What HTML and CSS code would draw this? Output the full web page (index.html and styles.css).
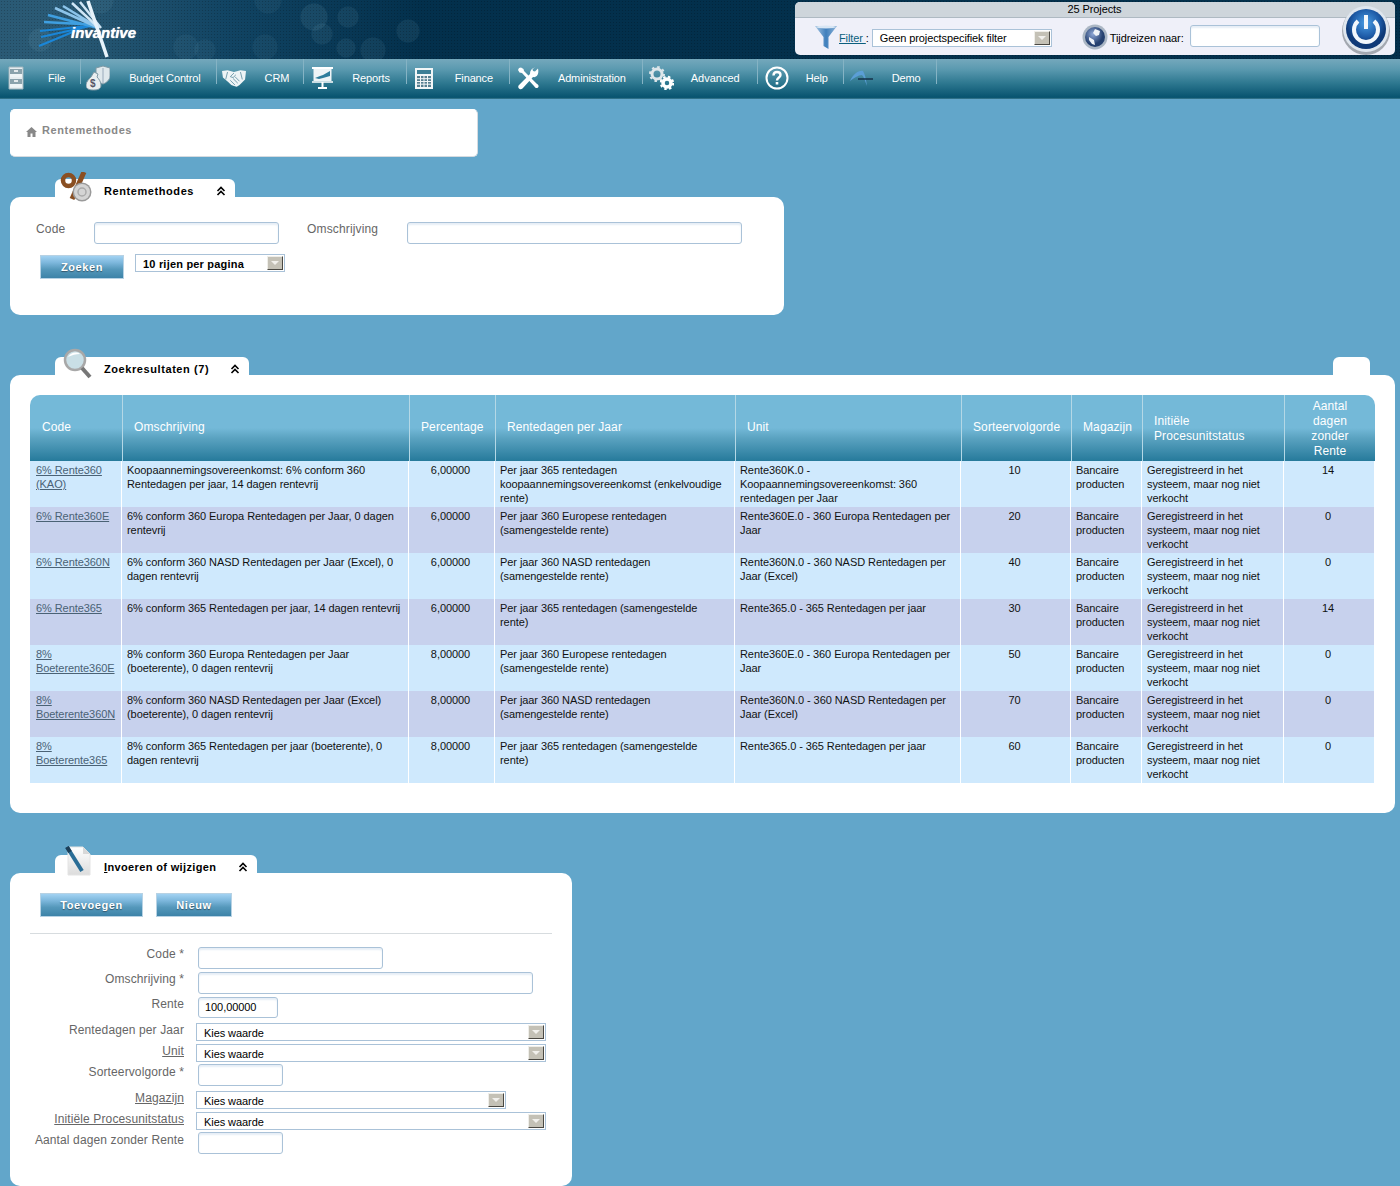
FILE: index.html
```html
<!DOCTYPE html>
<html lang="nl">
<head>
<meta charset="utf-8">
<title>Rentemethodes</title>
<link rel="stylesheet" href="styles.css">
</head>
<body>
<svg class="defs" width="0" height="0" aria-hidden="true">
  <symbol id="chev" viewBox="0 0 10 10"><path d="M1.500 5 5 1.500 8.500 5M1.500 9 5 5.500 8.500 9" fill="none" stroke="#000" stroke-width="1.600"/></symbol>
</svg>
<header class="top">
  <div class="logo">
    <svg class="logo-rays" width="80" height="59" viewBox="36 0 80 59">
      <g fill="none">
        <path d="M39 46 80 29M41 37 95 25M40 31 97 25" stroke="#1a86d8" stroke-width="2"/>
        <path d="M44 22 98 25M48 15 98 28" stroke="#3f9fe0" stroke-width="2.500"/>
        <path d="M55 8 99 28M63 6 99 28" stroke="#8cc4ea" stroke-width="2.500"/>
        <path d="M72 3 99 28M80 2 101 28" stroke="#cfe6f6" stroke-width="2.500"/>
        <path d="M88 1 107 57" stroke="#e8f3fb" stroke-width="3.500"/>
      </g>
    </svg>
    <span class="logo-text">invantive</span>
  </div>
  <div class="projbox">
    <div class="projbox-title">25 Projects</div>
    <div class="projbox-row">
      <svg class="funnel" width="22" height="24" viewBox="0 0 22 24"><defs><linearGradient id="fg" x1="0" x2="1"><stop offset="0" stop-color="#a8c6e2"/><stop offset=".5" stop-color="#3f7fbc"/><stop offset="1" stop-color="#8fb4d8"/></linearGradient></defs><path d="M0 1h22L13.500 12v12l-5-3V12z" fill="url(#fg)"/><ellipse cx="11" cy="2" rx="10" ry="1.500" fill="#d8e6f4"/></svg>
      <a class="filter-link" href="#">Filter </a><span class="colon">:</span>
      <div class="sel sel-filter"><span>Geen projectspecifiek filter</span><i class="arrow"></i></div>
      <svg class="globe" width="26" height="26" viewBox="0 0 26 26"><defs><radialGradient id="gg" cx=".4" cy=".35"><stop offset="0" stop-color="#8fa8d8"/><stop offset="1" stop-color="#25406f"/></radialGradient></defs><circle cx="13" cy="13" r="12.500" fill="#aab6c4"/><circle cx="13" cy="13" r="10" fill="url(#gg)"/><path d="M13 5l5 2-1 4-3 1-3-3zM7 13l5 3 1 5-3-1-3-4z" fill="#eef2f8"/></svg>
      <span class="tijd">Tijdreizen naar:</span>
      <input class="field field-tijd" type="text">
    </div>
    <svg class="power" width="50" height="50" viewBox="0 0 50 50"><defs><radialGradient id="pg" cx=".5" cy=".35"><stop offset="0" stop-color="#4a9ee6"/><stop offset=".7" stop-color="#1d5aa6"/><stop offset="1" stop-color="#0f3a78"/></radialGradient></defs><circle cx="25" cy="26" r="24" fill="#586068" opacity=".5"/><circle cx="25" cy="24" r="23" fill="#dfe6ee"/><circle cx="25" cy="24" r="20" fill="url(#pg)"/><path d="M17 16a12 12 0 1 0 16 0" fill="none" stroke="#f2f7fc" stroke-width="4"/><path d="M25 10v14" stroke="#f2f7fc" stroke-width="4"/></svg>
  </div>
</header>

<nav class="nav">
  <a class="nav-item" href="#"><span class="nav-ico"><svg width="16" height="24" viewBox="0 0 16 24"><path d="M1 1h14v22H1z" fill="#e6edf0" stroke="#9fb4bc"/><path d="M2 3h12v8H2zM2 13h12v8H2z" fill="#8aa2ac"/><path d="M2 8h12v3H2zM2 18h12v3H2z" fill="#eef4f6"/><path d="M6 5h4M6 15h4" stroke="#fff" stroke-width="1.500"/></svg></span>File</a>
  <a class="nav-item" href="#"><span class="nav-ico nav-ico-budget"><svg width="24" height="26" viewBox="0 0 24 26"><path d="M10 3l7-2 7 2v8c0 4-4 7-7 8-3-1-7-4-7-8z" fill="#dfe8ec" stroke="#7d98a4"/><path d="M17 3v15" stroke="#9ab"/><path d="M8 7l4 2-1 3c2 2 4 5 4 8 0 4-3 5-7.500 5S0 24 0 20c0-3 3-6 5-8z" fill="#e9eef0" stroke="#7d98a4"/><text x="4" y="22" class="ico-dollar">$</text></svg></span>Budget Control</a>
  <a class="nav-item ni-less" href="#"><span class="nav-ico nav-ico-crm"><svg width="24" height="19" viewBox="0 0 26 20"><path d="M0 2l6-1 7 2 7-2 6 1-1 9-6 6-3 2-3-1-3-1-3-3-6-5z" fill="#eef4f6"/><path d="M6 3 4 11M20 3l2 8M9 12l5 5M12 10l5 5M14 8l5 5M13 4l-4 4 3 1 3-3" fill="none" stroke="#6e98a8"/></svg></span>CRM</a>
  <a class="nav-item ni-more" href="#"><span class="nav-ico"><svg width="21" height="22" viewBox="0 0 21 22"><path d="M0 1h21" stroke="#fff" stroke-width="2"/><path d="M1.500 2h18v12h-18z" fill="#eef4f6"/><path d="M3 11l5-2 3-1 7-4v5l-7 2-4 1z" fill="#2e7d9c"/><path d="M0 15h21" stroke="#fff" stroke-width="1.500"/><path d="M10.500 15v5M6 21h9" stroke="#fff" stroke-width="2"/></svg></span>Reports</a>
  <a class="nav-item ni-more" href="#"><span class="nav-ico"><svg width="18" height="21" viewBox="0 0 18 21"><path d="M0 0h18v21H0z" fill="#f2f6f7"/><path d="M2 2h14v4H2z" fill="#3d7f96"/><path d="M2 8h14v11H2z" fill="#567f90"/><path d="M5.500 8v11M9 8v11M12.500 8v11M2 10.700h14M2 13.500h14M2 16.200h14" stroke="#f2f6f7"/></svg></span>Finance</a>
  <a class="nav-item ni-more" href="#"><span class="nav-ico nav-ico-6"><svg width="23" height="23" viewBox="0 0 23 23"><path d="M2 1 1 3l1.500 2.500L5 6l12 13c1 1.500 2.500 3 4 1.500s0-3-1.500-4L7 4l-.5-2L4 .5z" fill="#fff"/><path d="M21 1.500l-3 3-2-.5-.5-2L18 .5a6 6 0 0 0-5 6.500L2 18c-1.500 1.500-.5 3 0 3.500s2 1.500 3.500 0L16 10c3 .8 6.500-2 5-8.500z" fill="#fff"/></svg></span>Administration</a>
  <a class="nav-item ni-wide" href="#"><span class="nav-ico nav-ico-5"><svg width="25" height="24" viewBox="0 0 25 24"><circle cx="8" cy="8" r="5" fill="none" stroke="#dde6ea" stroke-width="3"/><circle cx="8" cy="8" r="7" fill="none" stroke="#dde6ea" stroke-width="2" stroke-dasharray="2.500 3"/><circle cx="18" cy="17" r="4" fill="none" stroke="#fff" stroke-width="3.500"/><circle cx="18" cy="17" r="6.200" fill="none" stroke="#fff" stroke-width="2" stroke-dasharray="2.500 2.400"/></svg></span>Advanced</a>
  <a class="nav-item" href="#"><span class="nav-ico nav-ico-6"><svg width="24" height="24" viewBox="0 0 24 24"><circle cx="12" cy="12" r="10.500" fill="none" stroke="#fff" stroke-width="2"/><path d="M8.500 9.500C8.500 7 10 6 12 6s3.500 1.200 3.500 3c0 2.500-3.500 2.500-3.500 5.500" fill="none" stroke="#fff" stroke-width="2.400"/><path d="M10.700 16h2.600v2.600h-2.600z" fill="#fff"/></svg></span>Help</a>
  <a class="nav-item" href="#"><span class="nav-ico nav-ico-5"><svg width="24" height="17" viewBox="0 0 24 17"><path d="M0 11C3 4 9 0 13 1c2 3 3 8 4 15-2-5-3-9-5-11-4 0-8 3-12 6z" fill="#5b9ed6"/><path d="M8 9h15" stroke="#16324a" stroke-width="1.500"/></svg></span>Demo</a>
</nav>

<main class="main">
  <div class="crumb">
    <svg class="home" width="11" height="11" viewBox="0 0 11 11"><path d="M5.500 1 0 6h1.500v5h3V7.500h2V11h3V6H11z" fill="#888"/></svg>
    <span>Rentemethodes</span>
  </div>

  <section class="section sec-search">
    <div class="tab tab-1">
      <svg class="tab-ico ico-pct" width="34" height="30" viewBox="0 0 34 30"><circle cx="8.500" cy="8.500" r="5.500" fill="none" stroke="#8a4f22" stroke-width="4.500"/><path d="M24 0 12 27" stroke="#8a4f22" stroke-width="5"/><circle cx="22" cy="20" r="9.500" fill="#9a9a9a"/><circle cx="22" cy="20" r="8" fill="#d4d4d4"/><circle cx="22" cy="20" r="4" fill="none" stroke="#aaa" stroke-width="1.500"/></svg>
      <span class="tab-title">Rentemethodes</span>
      <svg class="chev" width="10" height="10"><use href="#chev"/></svg>
    </div>
    <div class="panel panel-search">
      <div class="search-row">
        <label class="lbl lbl-code">Code</label>
        <input class="field field-code" type="text">
        <label class="lbl lbl-oms">Omschrijving</label>
        <input class="field field-oms" type="text">
      </div>
      <div class="search-row2">
        <button class="btn btn-zoek" type="button">Zoeken</button>
        <div class="sel sel-rows"><span>10 rijen per pagina</span><i class="arrow"></i></div>
      </div>
    </div>
  </section>

  <section class="section sec-results">
    <div class="tab-line">
      <div class="tab tab-2">
        <svg class="tab-ico ico-mag" width="30" height="32" viewBox="0 0 30 32"><circle cx="13" cy="13" r="10" fill="#c9dfe6" stroke="#a8a8a8" stroke-width="2.500"/><path d="M6 10c2-4 8-6 12-3-4 0-8 1-12 3z" fill="#fff"/><path d="M20 21l8 9" stroke="#777" stroke-width="4"/></svg>
        <span class="tab-title">Zoekresultaten (7)</span>
        <svg class="chev" width="10" height="10"><use href="#chev"/></svg>
      </div>
      <div class="tab tab-blank"></div>
    </div>
    <div class="panel panel-results">
      <table class="grid">
        <colgroup><col class="c1"><col class="c2"><col class="c3"><col class="c4"><col class="c5"><col class="c6"><col class="c7"><col class="c8"><col class="c9"></colgroup>
        <thead>
          <tr>
            <th>Code</th><th>Omschrijving</th><th>Percentage</th><th>Rentedagen per Jaar</th><th>Unit</th><th>Sorteervolgorde</th><th>Magazijn</th><th class="th-low">Initiële Procesunitstatus</th><th class="ctr th-low">Aantal dagen zonder Rente</th>
          </tr>
        </thead>
        <tbody>
          <tr><td class="code"><a href="#">6% Rente360 (KAO)</a></td><td>Koopaannemingsovereenkomst: 6% conform 360 Rentedagen per jaar, 14 dagen rentevrij</td><td class="ctr">6,00000</td><td class="days">Per jaar 365 rentedagen koopaannemingsovereenkomst (enkelvoudige rente)</td><td>Rente360K.0 - Koopaannemingsovereenkomst: 360 rentedagen per Jaar</td><td class="ctr">10</td><td>Bancaire producten</td><td>Geregistreerd in het systeem, maar nog niet verkocht</td><td class="ctr">14</td></tr>
          <tr><td class="code"><a href="#">6% Rente360E</a></td><td>6% conform 360 Europa Rentedagen per Jaar, 0 dagen rentevrij</td><td class="ctr">6,00000</td><td class="days">Per jaar 360 Europese rentedagen (samengestelde rente)</td><td>Rente360E.0 - 360 Europa Rentedagen per Jaar</td><td class="ctr">20</td><td>Bancaire producten</td><td>Geregistreerd in het systeem, maar nog niet verkocht</td><td class="ctr">0</td></tr>
          <tr><td class="code"><a href="#">6% Rente360N</a></td><td>6% conform 360 NASD Rentedagen per Jaar (Excel), 0 dagen rentevrij</td><td class="ctr">6,00000</td><td class="days">Per jaar 360 NASD rentedagen (samengestelde rente)</td><td>Rente360N.0 - 360 NASD Rentedagen per Jaar (Excel)</td><td class="ctr">40</td><td>Bancaire producten</td><td>Geregistreerd in het systeem, maar nog niet verkocht</td><td class="ctr">0</td></tr>
          <tr><td class="code"><a href="#">6% Rente365</a></td><td>6% conform 365 Rentedagen per jaar, 14 dagen rentevrij</td><td class="ctr">6,00000</td><td class="days">Per jaar 365 rentedagen (samengestelde rente)</td><td>Rente365.0 - 365 Rentedagen per jaar</td><td class="ctr">30</td><td>Bancaire producten</td><td>Geregistreerd in het systeem, maar nog niet verkocht</td><td class="ctr">14</td></tr>
          <tr><td class="code"><a href="#">8% Boeterente360E</a></td><td>8% conform 360 Europa Rentedagen per Jaar (boeterente), 0 dagen rentevrij</td><td class="ctr">8,00000</td><td class="days">Per jaar 360 Europese rentedagen (samengestelde rente)</td><td>Rente360E.0 - 360 Europa Rentedagen per Jaar</td><td class="ctr">50</td><td>Bancaire producten</td><td>Geregistreerd in het systeem, maar nog niet verkocht</td><td class="ctr">0</td></tr>
          <tr><td class="code"><a href="#">8% Boeterente360N</a></td><td>8% conform 360 NASD Rentedagen per Jaar (Excel) (boeterente), 0 dagen rentevrij</td><td class="ctr">8,00000</td><td class="days">Per jaar 360 NASD rentedagen (samengestelde rente)</td><td>Rente360N.0 - 360 NASD Rentedagen per Jaar (Excel)</td><td class="ctr">70</td><td>Bancaire producten</td><td>Geregistreerd in het systeem, maar nog niet verkocht</td><td class="ctr">0</td></tr>
          <tr><td class="code"><a href="#">8% Boeterente365</a></td><td>8% conform 365 Rentedagen per jaar (boeterente), 0 dagen rentevrij</td><td class="ctr">8,00000</td><td class="days">Per jaar 365 rentedagen (samengestelde rente)</td><td>Rente365.0 - 365 Rentedagen per jaar</td><td class="ctr">60</td><td>Bancaire producten</td><td>Geregistreerd in het systeem, maar nog niet verkocht</td><td class="ctr">0</td></tr>
        </tbody>
      </table>
    </div>
  </section>

  <section class="section sec-edit">
    <div class="tab tab-3">
      <svg class="tab-ico ico-doc" width="30" height="32" viewBox="0 0 30 32"><defs><linearGradient id="dg" x1="0" y1="0" x2="0" y2="1"><stop offset="0" stop-color="#fff"/><stop offset="1" stop-color="#dcdcdc"/></linearGradient></defs><path d="M4 2h15l7 7v21H4z" fill="url(#dg)" stroke="#e4e4e4"/><path d="M19 2v7h7z" fill="#d8d8d8"/><path d="M3 2l15 24" stroke="#2a6d96" stroke-width="4"/><path d="M3 2l3 5" stroke="#1d3f58" stroke-width="4"/></svg>
      <span class="tab-title"><u>I</u>nvoeren of wijzigen</span>
      <svg class="chev" width="10" height="10"><use href="#chev"/></svg>
    </div>
    <div class="panel panel-edit">
      <div class="edit-btns">
        <button class="btn btn-add" type="button">Toevoegen</button>
        <button class="btn btn-new" type="button">Nieuw</button>
      </div>
      <hr class="rule">
      <form class="edit-form">
        <div class="frow"><label class="flbl">Code *</label><input class="field f-185" type="text"></div>
        <div class="frow"><label class="flbl">Omschrijving *</label><input class="field f-335" type="text"></div>
        <div class="frow frow-rente"><label class="flbl">Rente</label><input class="field f-80" type="text" value="100,00000"></div>
        <div class="frow frow-s"><label class="flbl">Rentedagen per Jaar</label><div class="sel sel-w350"><span>Kies waarde</span><i class="arrow"></i></div></div>
        <div class="frow frow-s2"><label class="flbl"><a href="#">Unit</a></label><div class="sel sel-w350"><span>Kies waarde</span><i class="arrow"></i></div></div>
        <div class="frow frow-sort"><label class="flbl lbl-low">Sorteervolgorde *</label><input class="field f-85" type="text"></div>
        <div class="frow frow-s"><label class="flbl"><a href="#">Magazijn</a></label><div class="sel sel-w310"><span>Kies waarde</span><i class="arrow"></i></div></div>
        <div class="frow frow-s2"><label class="flbl"><a href="#">Initiële Procesunitstatus</a></label><div class="sel sel-w350"><span>Kies waarde</span><i class="arrow"></i></div></div>
        <div class="frow"><label class="flbl lbl-low">Aantal dagen zonder Rente</label><input class="field f-85" type="text"></div>
      </form>
    </div>
  </section>
</main>
</body>
</html>
```
FILE: styles.css
```css
* { box-sizing: border-box; }
html, body { margin: 0; padding: 0; }
body {
  background: #62a6ca;
  font-family: "Liberation Sans", Arial, sans-serif;
  font-size: 11px;
  color: #000;
  height: 1186px;
  overflow: hidden;
}
.defs { position: absolute; }

/* top banner */
.top {
  position: relative;
  height: 59px;
  display: flex;
  justify-content: space-between;
  background-color: #03304c;
  background-image:
    radial-gradient(rgba(0,0,0,.2) 1px, transparent 1px),
    radial-gradient(circle at 314px 17px, rgba(120,170,190,.13) 13px, transparent 14px),
    radial-gradient(circle at 348px 17px, rgba(120,170,190,.11) 10px, transparent 11px),
    radial-gradient(circle at 322px 34px, rgba(120,170,190,.11) 10px, transparent 11px),
    radial-gradient(circle at 408px 31px, rgba(120,170,190,.11) 11px, transparent 12px),
    radial-gradient(circle at 346px 48px, rgba(120,170,190,.11) 9px, transparent 10px),
    radial-gradient(circle at 373px 50px, rgba(120,170,190,.1) 12px, transparent 13px),
    radial-gradient(circle at 265px 47px, rgba(120,170,190,.08) 12px, transparent 13px),
    radial-gradient(circle at 186px 47px, rgba(120,170,190,.08) 12px, transparent 13px),
    radial-gradient(circle at 205px 50px, rgba(120,170,190,.08) 10px, transparent 11px),
    radial-gradient(circle at 268px 0, rgba(120,170,190,.08) 13px, transparent 14px),
    radial-gradient(circle at 40px 40px, rgba(120,170,190,.12) 11px, transparent 12px),
    radial-gradient(circle at 100px 0, rgba(120,170,190,.1) 13px, transparent 14px),
    linear-gradient(90deg, #2a5a75 0, #2a5a75 60px, #114463 230px, #03304c 420px);
  background-size: 3px 3px, auto, auto, auto, auto, auto, auto, auto, auto, auto, auto, auto, auto, auto;
}
.logo { position: relative; width: 400px; }
.logo-rays { position: absolute; left: 36px; top: 0; }
.logo-text {
  position: absolute;
  left: 71px;
  top: 24px;
  color: #fff;
  font-size: 15px;
  line-height: 18px;
  font-weight: bold;
  font-style: italic;
  text-shadow: 0 0 1px #fff;
}
.projbox {
  position: relative;
  width: 600px;
  height: 53px;
  margin: 2px 5px 0 0;
  background: #eff0f9;
  border-radius: 5px;
  letter-spacing: -.1px;
}
.projbox-title {
  height: 16px;
  line-height: 14px;
  padding-right: 1px;
  text-align: center;
  background: #ced5db;
  border-bottom: 1px solid #aeb9c2;
  border-radius: 5px 5px 0 0;
  font-size: 11px;
}
.projbox-row { display: flex; align-items: center; height: 37px; padding: 2px 0 0 20px; }
.funnel { margin-top: -1px; }
.filter-link { margin-left: 2px; color: #0b5f7e; font-size: 11px; white-space: pre; }
.colon { margin-left: 0; }
.sel-filter { width: 180px; margin-left: 3px; }
.globe { margin-left: 30px; margin-top: -2px; }
.tijd { margin-left: 2px; width: 80px; }
.field-tijd { width: 130px; height: 22px; margin-top: -3px; }
.power { position: absolute; left: 546px; top: 3px; }

/* nav */
.nav {
  height: 40px;
  display: flex;
  background: linear-gradient(#74a8bc 0, #5b9ab0 25%, #2e7890 60%, #07536f 96%, #3f7c92 100%);
}
.nav-item {
  display: flex;
  align-items: center;
  height: 38px;
  padding-right: 16px;
  background: linear-gradient(#85b3c4, #85b3c4) right top / 1px 25px no-repeat;
  color: #fff;
  text-decoration: none;
  font-size: 11px;
  letter-spacing: -.14px;
  white-space: nowrap;
}
.ni-less { padding-right: 15px; }
.ni-more { padding-right: 17px; }
.ni-wide { padding-right: 18px; letter-spacing: 0; }
.nav-ico { flex: none; width: 48px; padding-left: 8px; display: flex; align-items: center; }
.nav-ico-budget { padding-left: 5px; }
.nav-ico-crm { padding-left: 5px; }
.nav-ico-6 { padding-left: 7px; }
.nav-ico-5 { padding-left: 6px; }
.ico-dollar { font: bold 10px "Liberation Sans", sans-serif; fill: #556; }

/* content */
.main { padding: 10px 0 0 10px; }
.crumb {
  width: 468px;
  height: 48px;
  background: #fff;
  border: 1px solid #d5dbe0;
  border-top-color: #fff;
  border-left-color: #fff;
  border-radius: 5px;
  display: flex;
  align-items: flex-start;
  gap: 5px;
  padding: 14px 0 0 15px;
  color: #888;
  font-weight: bold;
  font-size: 11px;
  letter-spacing: .58px;
  line-height: 13px;
}
.home { margin-top: 2px; }

.section { margin-top: 42px; }
.sec-search { margin-top: 22px; }

.tab-line { display: flex; justify-content: space-between; width: 1385px; }
.tab {
  position: relative;
  height: 18px;
  margin-left: 45px;
  background: #fff;
  border-radius: 6px 6px 0 0;
  display: flex;
  align-items: flex-start;
  padding: 6px 0 0 49px;
}
.tab-1 { width: 180px; }
.tab-2 { width: 194px; }
.tab-3 { width: 202px; }
.tab-blank { width: 37px; margin: 0 25px 0 0; padding: 0; }
.tab-title {
  font-size: 11px;
  font-weight: bold;
  line-height: 13px;
  letter-spacing: .58px;
  white-space: nowrap;
}
.tab-3 .tab-title { letter-spacing: .36px; }
.tab-ico { position: absolute; }
.ico-pct { left: 5px; top: -7px; }
.ico-mag { left: 7px; top: -10px; }
.ico-doc { left: 9px; top: -10px; }
.chev { position: absolute; right: 9px; top: 7px; }

.panel { background: #fff; border-radius: 10px; }
.panel-search { width: 774px; height: 118px; padding: 25px 0 0 26px; }
.panel-results { width: 1385px; padding: 20px 20px 30px; }
.panel-edit { width: 562px; height: 313px; padding: 20px 20px 0; }

.lbl { font-size: 12px; letter-spacing: .15px; color: #666; line-height: 15px; margin-top: 0; }
.search-row { display: flex; align-items: flex-start; height: 22px; }
.lbl-code { width: 58px; }
.lbl-oms { width: 100px; margin-left: 28px; }
.field-code { width: 185px; }
.field-oms { width: 335px; }
.search-row2 { display: flex; align-items: flex-start; margin: 10px 0 0 4px; }
.btn-zoek { margin-top: 1px; width: 84px; }
.sel-rows { width: 150px; margin-left: 11px; font-weight: bold; letter-spacing: .2px; }
.sel-rows span { padding-top: 2px; }

.field {
  display: block;
  height: 22px;
  padding: 0 6px;
  border: 1px solid #aac2d8;
  border-radius: 3px;
  background: #fff;
  box-shadow: inset 0 2px 2px #e6eef6;
  font: 11px "Liberation Sans", Arial, sans-serif;
  letter-spacing: -.07px;
  color: #000;
  outline: 0;
}
.sel {
  display: flex;
  align-items: center;
  justify-content: space-between;
  height: 18px;
  padding: 0 1px 0 7px;
  border: 1px solid #aac2d8;
  background: #fff;
  font-size: 11px;
  white-space: nowrap;
}
.arrow {
  position: relative;
  display: block;
  flex: none;
  width: 16px;
  height: 14px;
  background: #c4c1b6;
  border: 1px solid;
  border-color: #efeee9 #4a4842 #4a4842 #efeee9;
}
.arrow::after {
  content: "";
  position: absolute;
  left: 3px;
  top: 4px;
  border: 4px solid transparent;
  border-top: 4px solid #f1f0ec;
  border-bottom: 0;
}
.btn {
  height: 24px;
  padding: 0;
  border: 1px solid #b7d2e4;
  background: linear-gradient(#a2d2f2 0, #7db7dc 30%, #5598bb 60%, #3d83a8 100%);
  color: #fff;
  font: bold 11px "Liberation Sans", Arial, sans-serif;
  letter-spacing: .6px;
  text-shadow: 0 1px 1px #33566b;
}

/* table */
.grid { width: 1345px; table-layout: fixed; border-collapse: separate; border-spacing: 0; }
.c1 { width: 92px; } .c2 { width: 287px; } .c3 { width: 86px; } .c4 { width: 240px; } .c5 { width: 226px; }
.c6 { width: 110px; } .c7 { width: 71px; } .c8 { width: 142px; } .c9 { width: 91px; }
.grid th {
  height: 66px;
  padding: 2px 6px 4px 11px;
  border-left: 1px solid #b4d8e6;
  background: linear-gradient(#74b9d8 0, #74b9d8 50%, #5ba3c1 65%, #267a9b 100%);
  color: #fff;
  font-size: 12px;
  font-weight: normal;
  letter-spacing: .12px;
  line-height: 15px;
  text-align: left;
}
.grid th.th-low { padding-top: 4px; padding-bottom: 2px; }
.grid th:first-child { border-left: 0; border-top-left-radius: 10px; padding-left: 12px; }
.grid th:last-child { border-top-right-radius: 10px; padding-left: 10px; padding-right: 10px; }
.grid th.ctr { text-align: center; }
.grid td {
  height: 46px;
  padding: 2px 5px;
  border-right: 1px solid #fff;
  background: #cfe9fd;
  vertical-align: top;
  font-size: 11px;
  letter-spacing: -.07px;
  line-height: 14px;
  color: #111;
}
.grid tbody tr:nth-child(even) td { background: #c7d1ed; }
.grid td.ctr { text-align: center; padding: 2px 6px 2px 4px; }
.grid td.days { padding-right: 12px; }
.grid td.code { padding-left: 6px; padding-right: 2px; }
.grid td.code a { color: #4a6275; }

/* edit form */
.edit-btns { display: flex; gap: 13px; padding-left: 10px; }
.btn-add { width: 103px; }
.btn-new { width: 76px; }
.rule { height: 1px; margin: 16px 0 13px; border: 0; background: #d7dcdf; }
.edit-form { display: flex; flex-direction: column; }
.frow { display: flex; align-items: flex-start; height: 25px; }
.frow-rente { height: 26px; }
.frow-s { height: 21px; }
.frow-s2 { height: 20px; }
.frow-sort { height: 27px; }
.flbl {
  flex: none;
  width: 154px;
  margin-right: 12px;
  font-size: 12px;
  letter-spacing: .12px;
  line-height: 14px;
  color: #666;
  text-align: right;
  white-space: nowrap;
}
.lbl-low { padding-top: 1px; }
.flbl a { color: #666; }
.frow .field { margin-left: 2px; }
.frow-rente .field { height: 21px; padding-bottom: 2px; }
.f-185 { width: 185px; }
.f-335 { width: 335px; }
.f-80 { width: 80px; }
.f-85 { width: 85px; }
.sel-w350 { width: 350px; }
.sel-w310 { width: 310px; }
.edit-form .sel span { padding-top: 1px; letter-spacing: -.07px; }
```
